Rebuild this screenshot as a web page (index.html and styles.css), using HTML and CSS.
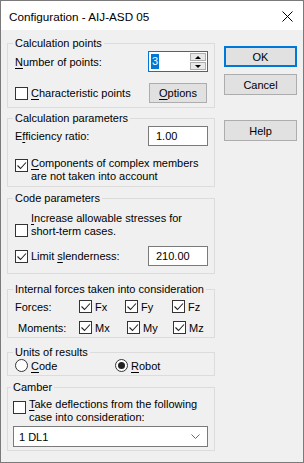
FILE: index.html
```html
<!DOCTYPE html>
<html lang="en">
<head>
    <meta charset="UTF-8">
    <meta name="viewport" content="width=device-width, initial-scale=1.0">
    <title>Configuration - AIJ-ASD 05</title>
    <link rel="stylesheet" href="styles.css">
</head>
<body>
    <div class="window">
        <div class="titlebar">
            <span class="title">Configuration - AIJ-ASD 05</span>
            <svg class="close" width="11" height="11" viewBox="0 0 11 11">
                <path d="M0.5 0.5 L10.5 10.5 M10.5 0.5 L0.5 10.5" stroke="#000" stroke-width="1" fill="none"/>
            </svg>
        </div>

        <div class="content">
            <div class="groups">
                <!-- Calculation points -->
                <fieldset class="group g-points">
                    <legend>Calculation points</legend>
                    <div class="row row-spin">
                        <span class="label"><u>N</u>umber of points:</span>
                        <div class="spin">
                            <div class="spin-field"><span class="selected">3</span></div>
                            <div class="spin-buttons">
                                <div class="spin-btn"><span class="arrow-up"></span></div>
                                <div class="spin-btn"><span class="arrow-down"></span></div>
                            </div>
                        </div>
                    </div>
                    <div class="row row-options">
                        <label class="check-label"><span class="check"></span><span><u>C</u>haracteristic points</span></label>
                        <div class="button btn-options"><u>O</u>ptions</div>
                    </div>
                </fieldset>

                <!-- Calculation parameters -->
                <fieldset class="group g-params">
                    <legend>Calculation parameters</legend>
                    <div class="row row-field">
                        <span class="label">E<u>f</u>ficiency ratio:</span>
                        <div class="field">1.00</div>
                    </div>
                    <label class="check-label multi row-components">
                        <span class="check checked"><svg width="11" height="11" viewBox="0 0 11 11"><path d="M1.5 5.5 L4.5 8.5 L10 2.5" stroke="#222" stroke-width="1.1" fill="none"/></svg></span>
                        <span><u>C</u>omponents of complex members<br>are not taken into account</span>
                    </label>
                </fieldset>

                <!-- Code parameters -->
                <fieldset class="group g-code">
                    <legend>Code parameters</legend>
                    <label class="check-label multi row-increase">
                        <span class="check"></span>
                        <span><u>I</u>ncrease allowable stresses for<br>short-term cases.</span>
                    </label>
                    <div class="row row-slender">
                        <label class="check-label">
                            <span class="check checked"><svg width="11" height="11" viewBox="0 0 11 11"><path d="M1.5 5.5 L4.5 8.5 L10 2.5" stroke="#222" stroke-width="1.1" fill="none"/></svg></span>
                            <span>Limit <u>s</u>lenderness:</span>
                        </label>
                        <div class="field">210.00</div>
                    </div>
                </fieldset>

                <!-- Internal forces -->
                <fieldset class="group g-forces">
                    <legend>Internal forces taken into consideration</legend>
                    <div class="force-row">
                        <span class="label">Forces:</span>
                        <label class="check-label"><span class="check checked"><svg width="11" height="11" viewBox="0 0 11 11"><path d="M1.5 5.5 L4.5 8.5 L10 2.5" stroke="#222" stroke-width="1.1" fill="none"/></svg></span><span>Fx</span></label>
                        <label class="check-label"><span class="check checked"><svg width="11" height="11" viewBox="0 0 11 11"><path d="M1.5 5.5 L4.5 8.5 L10 2.5" stroke="#222" stroke-width="1.1" fill="none"/></svg></span><span>Fy</span></label>
                        <label class="check-label"><span class="check checked"><svg width="11" height="11" viewBox="0 0 11 11"><path d="M1.5 5.5 L4.5 8.5 L10 2.5" stroke="#222" stroke-width="1.1" fill="none"/></svg></span><span>Fz</span></label>
                    </div>
                    <div class="force-row moments">
                        <span class="label">Moments:</span>
                        <label class="check-label"><span class="check checked"><svg width="11" height="11" viewBox="0 0 11 11"><path d="M1.5 5.5 L4.5 8.5 L10 2.5" stroke="#222" stroke-width="1.1" fill="none"/></svg></span><span>Mx</span></label>
                        <label class="check-label"><span class="check checked"><svg width="11" height="11" viewBox="0 0 11 11"><path d="M1.5 5.5 L4.5 8.5 L10 2.5" stroke="#222" stroke-width="1.1" fill="none"/></svg></span><span>My</span></label>
                        <label class="check-label"><span class="check checked"><svg width="11" height="11" viewBox="0 0 11 11"><path d="M1.5 5.5 L4.5 8.5 L10 2.5" stroke="#222" stroke-width="1.1" fill="none"/></svg></span><span>Mz</span></label>
                    </div>
                </fieldset>

                <!-- Units of results -->
                <fieldset class="group g-units">
                    <legend>Units of results</legend>
                    <div class="radio-row">
                        <label class="check-label"><span class="radio"></span><span><u>C</u>ode</span></label>
                        <label class="check-label"><span class="radio on"></span><span><u>R</u>obot</span></label>
                    </div>
                </fieldset>

                <!-- Camber -->
                <fieldset class="group g-camber">
                    <legend>Camber</legend>
                    <label class="check-label multi row-take">
                        <span class="check"></span>
                        <span><u>T</u>ake deflections from the following<br>case into consideration:</span>
                    </label>
                    <div class="combo">
                        <span>1 DL1</span>
                        <svg width="9" height="5" viewBox="0 0 9 5"><path d="M0.5 0.5 L4.5 4.5 L8.5 0.5" stroke="#444" stroke-width="1" fill="none"/></svg>
                    </div>
                </fieldset>
            </div>

            <div class="buttons">
                <div class="button btn-default">OK</div>
                <div class="button">Cancel</div>
                <div class="button btn-help">Help</div>
            </div>
        </div>
    </div>
</body>
</html>
```

FILE: styles.css
```css
body {
    margin: 0;
    font-family: "Liberation Sans", Arial, sans-serif;
    font-size: 11px;
    color: #000;
    background: #f0f0f0;
}

.window {
    width: 304px;
    height: 463px;
    box-sizing: border-box;
    border: 1px solid #7a7a7a;
    background: #f0f0f0;
    overflow: hidden;
}

.titlebar {
    height: 29px;
    background: #fff;
    display: flex;
    align-items: center;
    justify-content: space-between;
    padding: 0 10px 0 8px;
}

.title {
    font-size: 11.7px;
    margin-top: 1px;
}

.close {
    display: block;
    margin-top: 1px;
}

.content {
    display: flex;
    padding: 6px 0 0 6px;
}

.groups {
    width: 208px;
}

.group {
    margin: 0;
    padding: 0 6px 0 7px;
    border: 1px solid #dcdcdc;
    min-width: 0;
    white-space: nowrap;
}

.group legend {
    padding: 0 2px;
    margin-left: -2px;
    line-height: 14px;
}

.row {
    display: flex;
    align-items: center;
    justify-content: space-between;
}

u {
    text-decoration-thickness: 1px;
    text-underline-offset: 2px;
}

/* checkbox and radio */
.check-label {
    display: flex;
    align-items: center;
}

.check {
    width: 13px;
    height: 13px;
    box-sizing: border-box;
    border: 1px solid #333;
    background: #fff;
    margin-right: 3px;
    flex: none;
    display: flex;
    align-items: center;
    justify-content: center;
}

.check svg {
    display: block;
}

.radio {
    width: 13px;
    height: 13px;
    box-sizing: border-box;
    border: 1px solid #333;
    border-radius: 50%;
    background: #fff;
    margin-right: 3px;
    flex: none;
    display: flex;
    align-items: center;
    justify-content: center;
}

.radio.on::after {
    content: "";
    width: 7px;
    height: 7px;
    border-radius: 50%;
    background: #222;
}

.multi {
    align-items: flex-start;
    line-height: 13px;
}

/* inputs */
.field {
    width: 60px;
    height: 20px;
    box-sizing: border-box;
    border: 1px solid #7a7a7a;
    background: #fff;
    padding-left: 7px;
    line-height: 18px;
}

.spin {
    display: flex;
    width: 60px;
    height: 21px;
    box-sizing: border-box;
    border: 1px solid #0078d7;
    background: #fff;
}

.spin-field {
    flex: 1;
    padding: 2px 0 0 2px;
}

.selected {
    background: #0078d7;
    color: #fff;
    display: inline-block;
    line-height: 15px;
    padding: 0 1px;
}

.spin-buttons {
    width: 16px;
    display: flex;
    flex-direction: column;
    padding: 1px 1px 1px 0;
    gap: 1px;
}

.spin-btn {
    flex: 1;
    border: 1px solid #adadad;
    background: #e8e8e8;
    display: flex;
    align-items: center;
    justify-content: center;
}

.arrow-up {
    border-left: 3px solid transparent;
    border-right: 3px solid transparent;
    border-bottom: 3px solid #000;
}

.arrow-down {
    border-left: 3px solid transparent;
    border-right: 3px solid transparent;
    border-top: 3px solid #000;
}

.combo {
    height: 21px;
    box-sizing: border-box;
    border: 1px solid #7a7a7a;
    background: #fff;
    display: flex;
    align-items: center;
    justify-content: space-between;
    padding: 0 7px 0 5px;
}

.combo svg {
    opacity: 0.8;
}

/* buttons */
.buttons {
    width: 73px;
    margin-left: 9px;
    padding-top: 10px;
}

.button {
    height: 21px;
    box-sizing: border-box;
    border: 1px solid #adadad;
    background: #e1e1e1;
    display: flex;
    align-items: center;
    justify-content: center;
    margin-bottom: 7px;
}

.btn-default {
    border: 2px solid #0078d7;
}

.btn-help {
    margin-top: 25px;
}

/* group specifics */
.g-points {
    padding-bottom: 4px;
}

.row-spin {
    margin-top: 1px;
}

.row-options {
    margin-top: 11px;
}

.btn-options {
    width: 58px;
    height: 20px;
    margin: 0 1px 0 0;
}

.g-params {
    margin-top: 3px;
    padding-bottom: 3px;
}

.row-field {
    margin-top: 1px;
}

.row-components {
    margin-top: 11px;
}

.row-components .check {
    margin-top: 2px;
}

.g-code {
    margin-top: 4px;
    padding-bottom: 7px;
}

.row-increase {
    margin-top: 7px;
}

.row-increase .check {
    margin-top: 12px;
}

.row-slender {
    margin-top: 8px;
}

.g-forces {
    margin-top: 8px;
    padding-bottom: 2px;
}

.force-row {
    display: grid;
    grid-template-columns: 64px 46px 47px 1fr;
    align-items: center;
    height: 15px;
    margin-top: 3px;
}

.force-row.moments {
    grid-template-columns: 64px 48px 46px 1fr;
    margin-top: 6px;
}

.force-row.moments .label {
    padding-left: 3px;
}

.g-units {
    margin-top: 7px;
    padding-bottom: 3px;
}

.radio-row {
    display: grid;
    grid-template-columns: 100px 1fr;
    height: 13px;
    align-items: center;
}

.g-camber {
    margin-top: 4px;
    padding: 0 6px 3px 5px;
}

.row-take {
    margin-top: 4px;
}

.row-take .check {
    margin-top: 3px;
}

.combo {
    margin-top: 2px;
}
```
